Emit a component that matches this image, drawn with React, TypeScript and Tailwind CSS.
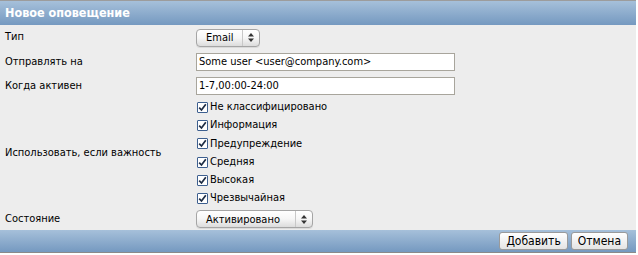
import type { ReactNode } from 'react'

const levels = [
  'Не классифицировано',
  'Информация',
  'Предупреждение',
  'Средняя',
  'Высокая',
  'Чрезвычайная',
]

function Select({ value, width }: { value: string; width: string }) {
  return (
    <div
      className={`${width} h-[18px] flex items-center rounded-[4px] border border-[#a5a5a5] bg-gradient-to-b from-white via-[#f6f6f6] to-[#dcdcdc] shadow-[0_1px_0_rgba(0,0,0,0.08)]`}
    >
      <span className="flex-1 pl-[9px] text-[11px] text-black leading-none">{value}</span>
      <span className="h-full w-[17px] border-l border-[#c8c8c8] flex items-center justify-center">
        <svg width="6" height="9" viewBox="0 0 6 9">
          <path d="M3 0 L6 3.5 H0 Z" fill="#333" />
          <path d="M3 9 L6 5.5 H0 Z" fill="#333" />
        </svg>
      </span>
    </div>
  )
}

function Checkbox({ label }: { label: string }) {
  return (
    <div className="h-[18.3px] flex items-center gap-[2px]">
      <span className="w-[11px] h-[11px] border border-[#3d5f8f] bg-white flex items-center justify-center rounded-[1px]">
        <svg width="9" height="9" viewBox="0 0 9 9">
          <path d="M1.2 4.6 L3.5 7 L7.8 1.3" fill="none" stroke="#1d2c44" strokeWidth="1.7" />
        </svg>
      </span>
      <span className="text-[11px] text-black">{label}</span>
    </div>
  )
}

function Row({ label, height, children }: { label: string; height: string; children: ReactNode }) {
  return (
    <div className={`flex items-center ${height}`}>
      <div className="w-[196px] pl-[5px] text-[11px] text-black">{label}</div>
      <div className="flex-1">{children}</div>
    </div>
  )
}

function Button({ children }: { children: ReactNode }) {
  return (
    <button className="h-[18px] px-[6px] rounded-[3px] border border-[#9a9a9a] bg-gradient-to-b from-white to-[#e4e4e4] text-[12px] text-black leading-none">
      {children}
    </button>
  )
}

export default function App() {
  return (
    <div
      className="w-[638px] h-[255px] bg-white"
      style={{ fontFamily: '"DejaVu Sans Condensed", "DejaVu Sans", Verdana, sans-serif' }}
    >
      <div className="w-[636px] h-[253px] border-t border-[#9c9c9c] flex flex-col bg-[#ededed]">
        <div className="h-[24px] bg-gradient-to-b from-[#a6c0da] to-[#7599c0] flex items-center pl-[5px]">
          <span className="text-[12.5px] font-bold text-white">Новое оповещение</span>
        </div>
        <Row label="Тип" height="h-[25px]">
          <Select value="Email" width="w-[64px]" />
        </Row>
        <Row label="Отправлять на" height="h-[24px]">
          <div className="w-[259px] h-[18px] border border-[#a8a59c] bg-white flex items-center px-[2px] text-[11px] text-black">
            Some user &lt;user@company.com&gt;
          </div>
        </Row>
        <Row label="Когда активен" height="h-[24px]">
          <div className="w-[259px] h-[18px] border border-[#a8a59c] bg-white flex items-center px-[2px] text-[11px] text-black">
            1-7,00:00-24:00
          </div>
        </Row>
        <Row label="Использовать, если важность" height="h-[110px]">
          <div className="flex flex-col pl-[1px]">
            {levels.map((l) => (
              <Checkbox key={l} label={l} />
            ))}
          </div>
        </Row>
        <Row label="Состояние" height="h-[22px]">
          <Select value="Активировано" width="w-[117px]" />
        </Row>
        <div className="flex-1 bg-gradient-to-b from-[#a6c0da] to-[#7599c0] flex items-center justify-end gap-[3px] pr-[8px] border-b border-[#8a8a8a]">
          <Button>Добавить</Button>
          <Button>Отмена</Button>
        </div>
      </div>
    </div>
  )
}
